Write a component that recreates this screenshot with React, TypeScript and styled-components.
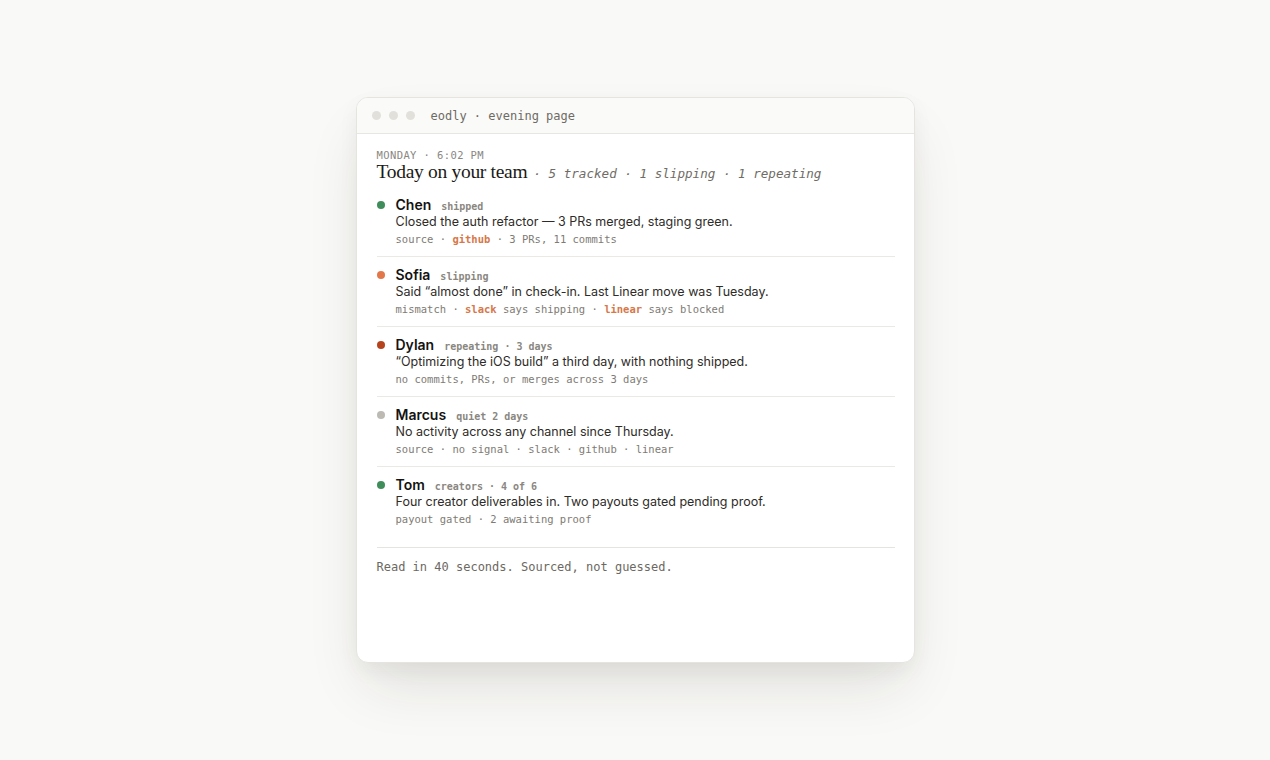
import React from "react";
import styled, { createGlobalStyle } from "styled-components";

const Global = createGlobalStyle`
  html, body { margin: 0; padding: 0; background: #f9f9f7; }
  body { font-family: Inter, "Noto Sans", sans-serif; }
`;

const MONO = `"DejaVu Sans Mono", "Liberation Mono", monospace`;

const Page = styled.div`
  width: 1270px;
  height: 760px;
  display: flex;
  justify-content: center;
  align-items: flex-start;
  padding-top: 97px;
  box-sizing: border-box;
`;

const Card = styled.div`
  width: 559px;
  height: 566px;
  box-sizing: border-box;
  background: #ffffff;
  border: 1px solid #e6e4de;
  border-radius: 12px;
  box-shadow: 0 30px 60px -10px rgba(40, 35, 25, 0.12), 0 8px 20px rgba(40, 35, 25, 0.05);
  overflow: hidden;
  display: flex;
  flex-direction: column;
`;

const TitleBar = styled.div`
  height: 36px;
  flex: none;
  box-sizing: border-box;
  background: #fafaf8;
  border-bottom: 1px solid #e8e6e0;
  display: flex;
  align-items: center;
  padding-left: 15px;
  gap: 8px;
`;

const Dot = styled.span`
  width: 9px;
  height: 9px;
  border-radius: 50%;
  background: #e2e0da;
`;

const WinTitle = styled.span`
  font-family: ${MONO};
  font-size: 12px;
  color: #6e6b64;
  margin-left: 8px;
`;

const Body = styled.div`
  padding: 15px 19px 0 20px;
  display: flex;
  flex-direction: column;
`;

const Eyebrow = styled.div`
  font-family: ${MONO};
  font-size: 10.5px;
  letter-spacing: 0.4px;
  color: #8a877f;
  line-height: 12px;
`;

const HeadingRow = styled.div`
  display: flex;
  align-items: baseline;
  gap: 6px;
`;

const Heading = styled.h1`
  margin: 0;
  font-family: "Liberation Serif", "DejaVu Serif", serif;
  font-weight: 400;
  font-size: 19.5px;
  letter-spacing: -0.3px;
  color: #1b1a17;
  line-height: 22px;
`;

const Summary = styled.span`
  font-family: ${MONO};
  font-style: italic;
  font-size: 12.6px;
  color: #6f6c65;
`;

const List = styled.div`
  display: flex;
  flex-direction: column;
  margin-top: 12px;
`;

const Row = styled.div`
  display: grid;
  grid-template-columns: 19px 1fr;
  padding: 1px 0 10px;
  border-bottom: 1px solid #ebe9e4;
  & + & {
    padding-top: 9px;
  }
`;

const LastRow = styled(Row)`
  border-bottom: none;
`;

const StatusDot = styled.span<{ $c: string }>`
  width: 8px;
  height: 8px;
  border-radius: 50%;
  background: ${(p) => p.$c};
  margin-top: 5px;
`;

const NameLine = styled.div`
  display: flex;
  align-items: baseline;
  gap: 10px;
  height: 17px;
  line-height: 17px;
`;

const Name = styled.span`
  font-size: 14px;
  font-weight: 600;
  color: #141311;
  line-height: 17px;
`;

const Tag = styled.span`
  font-family: ${MONO};
  font-size: 10px;
  font-weight: 600;
  color: #8a877f;
  line-height: 12px;
`;

const Desc = styled.div`
  font-size: 12.5px;
  color: #2e2c28;
  line-height: 16px;
  margin-top: 1px;
`;

const Meta = styled.div`
  font-family: ${MONO};
  font-size: 10.5px;
  color: #7e7b74;
  line-height: 14px;
  margin-top: 2px;
  white-space: pre;
`;

const Hl = styled.span`
  color: #d6784a;
  font-weight: 700;
`;

const Footer = styled.div`
  margin-top: 11px;
  border-top: 1px solid #e6e4df;
  padding-top: 12px;
  font-family: ${MONO};
  font-size: 12px;
  line-height: 14px;
  color: #6c6962;
`;

type Item = {
  name: string;
  color: string;
  tag: string;
  desc: string;
  meta: React.ReactNode;
};

const items: Item[] = [
  {
    name: "Chen",
    color: "#3f8d5b",
    tag: "shipped",
    desc: "Closed the auth refactor — 3 PRs merged, staging green.",
    meta: (
      <>
        source · <Hl>github</Hl> · 3 PRs, 11 commits
      </>
    ),
  },
  {
    name: "Sofia",
    color: "#e2784a",
    tag: "slipping",
    desc: "Said “almost done” in check-in. Last Linear move was Tuesday.",
    meta: (
      <>
        mismatch · <Hl>slack</Hl> says shipping · <Hl>linear</Hl> says blocked
      </>
    ),
  },
  {
    name: "Dylan",
    color: "#b5441e",
    tag: "repeating · 3 days",
    desc: "“Optimizing the iOS build” a third day, with nothing shipped.",
    meta: <>no commits, PRs, or merges across 3 days</>,
  },
  {
    name: "Marcus",
    color: "#bcbab3",
    tag: "quiet 2 days",
    desc: "No activity across any channel since Thursday.",
    meta: <>source · no signal · slack · github · linear</>,
  },
  {
    name: "Tom",
    color: "#3f8d5b",
    tag: "creators · 4 of 6",
    desc: "Four creator deliverables in. Two payouts gated pending proof.",
    meta: <>payout gated · 2 awaiting proof</>,
  },
];

export default function App() {
  return (
    <>
      <Global />
      <Page>
        <Card>
          <TitleBar>
            <Dot />
            <Dot />
            <Dot />
            <WinTitle>eodly · evening page</WinTitle>
          </TitleBar>
          <Body>
            <Eyebrow>MONDAY · 6:02 PM</Eyebrow>
            <HeadingRow>
              <Heading>Today on your team</Heading>
              <Summary>· 5 tracked · 1 slipping · 1 repeating</Summary>
            </HeadingRow>
            <List>
              {items.map((it, i) => {
                const R = i === items.length - 1 ? LastRow : Row;
                return (
                  <R key={it.name}>
                    <StatusDot $c={it.color} />
                    <div>
                      <NameLine>
                        <Name>{it.name}</Name>
                        <Tag>{it.tag}</Tag>
                      </NameLine>
                      <Desc>{it.desc}</Desc>
                      <Meta>{it.meta}</Meta>
                    </div>
                  </R>
                );
              })}
            </List>
            <Footer>Read in 40 seconds. Sourced, not guessed.</Footer>
          </Body>
        </Card>
      </Page>
    </>
  );
}
